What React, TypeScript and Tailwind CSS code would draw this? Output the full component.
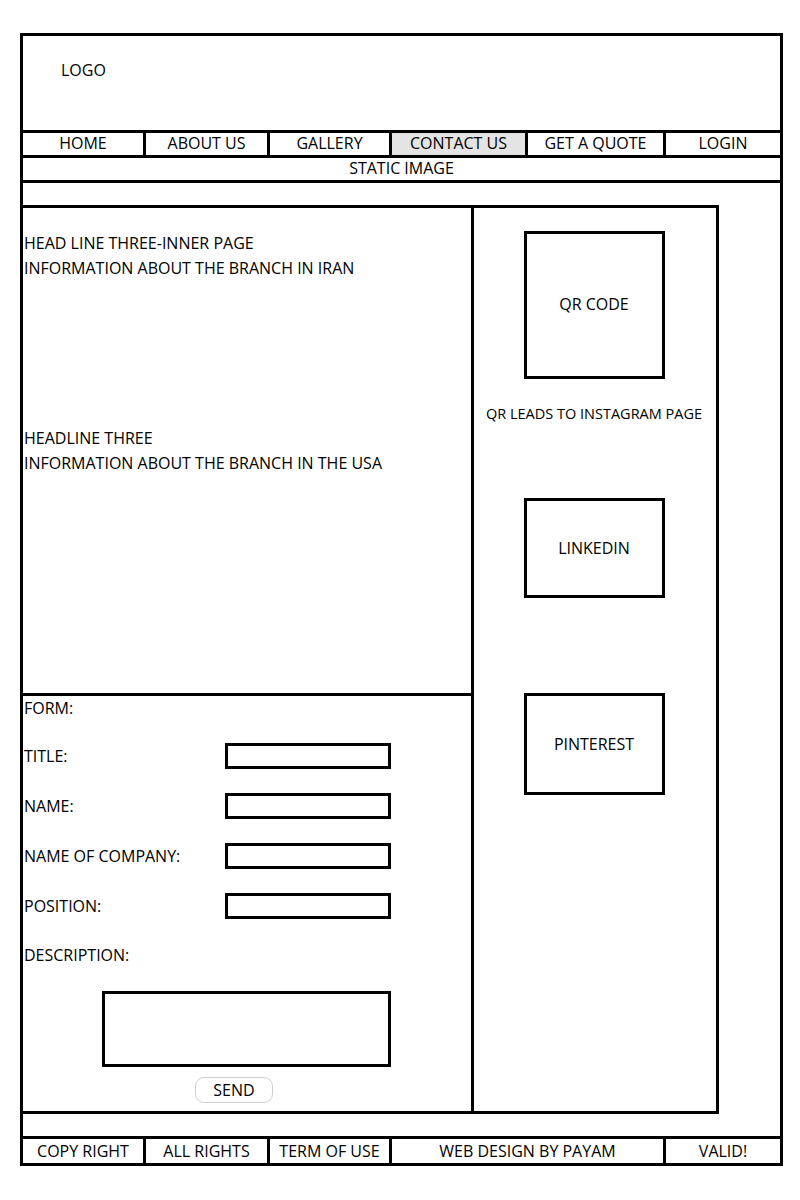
export default function App() {
  const nav = [
    { label: "HOME", w: "w-[120px]" },
    { label: "ABOUT US", w: "w-[124px]" },
    { label: "GALLERY", w: "w-[122px]" },
    { label: "CONTACT US", w: "w-[136px]", active: true },
    { label: "GET A QUOTE", w: "w-[138px]" },
    { label: "LOGIN", w: "flex-1" },
  ];
  const footer = [
    { label: "COPY RIGHT", w: "w-[120px]" },
    { label: "ALL RIGHTS", w: "w-[124px]" },
    { label: "TERM OF USE", w: "w-[122px]" },
    { label: "WEB DESIGN BY PAYAM", w: "w-[274px]" },
    { label: "VALID!", w: "flex-1" },
  ];
  const fields = ["TITLE:", "NAME:", "NAME OF COMPANY:", "POSITION:"];

  return (
    <div className="w-[800px] h-[1200px] bg-white pl-[20px] pt-[33px] text-black text-[16px] leading-[24px] font-['Open_Sans',sans-serif]">
      <div className="w-[763px] h-[1133px] border-[3px] border-black flex flex-col">
        {/* header */}
        <div className="h-[94px] pl-[38px] pt-[22px]">LOGO</div>

        {/* nav */}
        <div className="h-[25px] border-t-[3px] border-black flex">
          {nav.map((n, i) => (
            <div
              key={n.label}
              className={`${n.w} h-full flex items-center justify-center pb-[2px] ${i > 0 ? "border-l-[3px] border-black" : ""} ${n.active ? "bg-[#e4e4e4]" : ""}`}
            >
              {n.label}
            </div>
          ))}
        </div>

        {/* static image */}
        <div className="h-[25px] border-t-[3px] border-black flex items-center justify-center pb-[2px]">STATIC IMAGE</div>
        <div className="h-[25px] border-t-[3px] border-black" />

        {/* main */}
        <div className="flex">
          <div className="w-[696px] border-t-[3px] border-r-[3px] border-b-[3px] border-black flex">
            <div className="w-[451px] border-r-[3px] border-black flex flex-col">
              <div className="h-[488px] border-b-[3px] border-black pl-[1px] pt-[23px]">
                <p>HEAD LINE THREE-INNER PAGE</p>
                <p className="leading-[26px]">INFORMATION ABOUT THE BRANCH IN IRAN</p>
                <p className="mt-[145px]">HEADLINE THREE</p>
                <p className="leading-[26px]">INFORMATION ABOUT THE BRANCH IN THE USA</p>
              </div>
              <div className="h-[415px] pl-[1px] flex flex-col">
                <p>FORM:</p>
                <div className="mt-[23px] flex flex-col gap-[24px]">
                  {fields.map((f) => (
                    <div key={f} className="h-[26px] flex items-center">
                      <span className="w-[201px]">{f}</span>
                      <div className="w-[166px] h-[26px] border-[3px] border-black" />
                    </div>
                  ))}
                </div>
                <div className="mt-[23px] h-[26px] flex items-center">DESCRIPTION:</div>
                <div className="mt-[23px] ml-[78px] w-[289px] h-[76px] border-[3px] border-black" />
                <div className="mt-[10px] ml-[171px] w-[78px] h-[26px] rounded-[9px] border border-[#d0d0d0] flex items-center justify-center">
                  SEND
                </div>
              </div>
            </div>
            <div className="flex-1 flex flex-col items-center pr-[2px]">
              <div className="mt-[23px] w-[141px] h-[148px] border-[3px] border-black flex items-center justify-center pb-[3px]">
                QR CODE
              </div>
              <p className="mt-[23px] text-[14.5px]">QR LEADS TO INSTAGRAM PAGE</p>
              <div className="mt-[72px] w-[141px] h-[100px] border-[3px] border-black flex items-center justify-center">
                LINKEDIN
              </div>
              <div className="mt-[95px] w-[141px] h-[102px] border-[3px] border-black flex items-center justify-center">
                PINTEREST
              </div>
            </div>
          </div>
        </div>

        <div className="h-[22px]" />

        {/* footer */}
        <div className="flex-1 border-t-[3px] border-black flex">
          {footer.map((n, i) => (
            <div
              key={n.label}
              className={`${n.w} h-full flex items-center justify-center ${i > 0 ? "border-l-[3px] border-black" : ""}`}
            >
              {n.label}
            </div>
          ))}
        </div>
      </div>
    </div>
  );
}
